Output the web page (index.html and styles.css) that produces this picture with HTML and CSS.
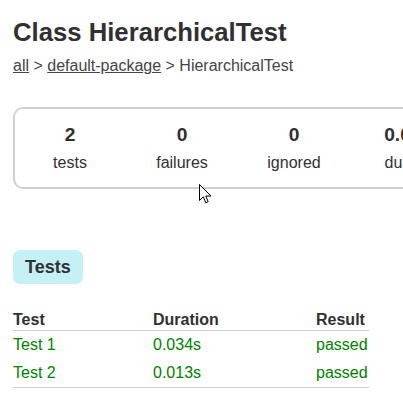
FILE: index.html
```
<!DOCTYPE html>
<html>
<head>
<meta charset="utf-8">
<title>Test results - Class HierarchicalTest</title>
<link rel="stylesheet" href="styles.css">
</head>
<body>
<div class="content">
  <h1 class="title">Class HierarchicalTest</h1>
  <div class="breadcrumbs"><a href="#">all</a> &gt; <a href="#">default-package</a> &gt; HierarchicalTest</div>
  <div class="summary">
    <div class="summary-group">
      <div class="info-box"><div class="counter">2</div><div class="label">tests</div></div>
      <div class="info-box"><div class="counter">0</div><div class="label">failures</div></div>
      <div class="info-box"><div class="counter">0</div><div class="label">ignored</div></div>
      <div class="info-box wide"><div class="counter">0.047s</div><div class="label">duration</div></div>
      <div class="info-box"><div class="counter">100%</div><div class="label">successful</div></div>
    </div>
  </div>
  <ul class="tab-links">
    <li class="tab selected">Tests</li>
  </ul>
  <table class="tests">
    <thead>
      <tr><th class="c-test">Test</th><th class="c-dur">Duration</th><th class="c-res">Result</th></tr>
    </thead>
    <tbody>
      <tr class="success"><td>Test 1</td><td>0.034s</td><td>passed</td></tr>
      <tr class="success last"><td>Test 2</td><td>0.013s</td><td>passed</td></tr>
    </tbody>
  </table>
</div>
<svg class="cursor" width="14" height="21" viewBox="0 0 14 21">
  <path d="M0.5 0.5 L0.5 16.5 L4.3 12.8 L6.8 18.8 L9.2 17.8 L6.8 12 L12 12 Z" fill="#fff" stroke="#000" stroke-width="1" stroke-linejoin="miter"/>
</svg>
</body>
</html>
```
FILE: styles.css
```
html { overflow: hidden; }
body {
  margin: 0;
  padding: 0;
  font-family: "Liberation Sans", Arial, sans-serif;
  font-size: 16px;
  color: #303030;
  background: #fff;
  position: relative;
  min-height: 418px;
}
a, a:visited { color: #303030; }
.content { padding: 17px 0 0 13px; width: 800px; }
.title {
  margin: 0;
  font-size: 25.7px;
  line-height: 30px;
  font-weight: bold;
}
.breadcrumbs {
  margin-top: 10px;
  line-height: 18px;
  color: #444;
}
.breadcrumbs a { color: #444; }
.summary { margin-top: 32px; }
.summary-group {
  display: inline-flex;
  gap: 2px;
  border: 2px solid #d0d0d0;
  border-radius: 10px;
}
.info-box {
  width: 110px;
  padding: 15px 0;
  text-align: center;
}
.info-box.wide { width: 125px; }
.counter {
  font-size: 19.2px;
  line-height: 22px;
  font-weight: bold;
  margin-bottom: 8px;
}
.label { line-height: 18px; }
.tab-links {
  list-style: none;
  margin: 61px 0 0 0;
  padding: 0;
  display: flex;
}
.tab {
  padding: 6px 12px;
  line-height: 22px;
  font-size: 18px;
  font-weight: bold;
  border-radius: 7px;
  background: #f0f0f0;
}
.tab.selected { background: #c5f0f5; }
.tests {
  margin-top: 27px;
  border-collapse: collapse;
}
.tests th {
  text-align: left;
  font-weight: bold;
  line-height: 18px;
  padding: 0 0 1px 0;
  border-bottom: 1px solid #d0d0d0;
}
.tests td {
  line-height: 18px;
  padding: 5px 0;
}
.c-test { width: 140px; }
.c-dur { width: 163px; }
.c-res { width: 53px; }
.success td { color: #008000; }
.last td { border-bottom: 1px solid #d0d0d0; }
.cursor {
  position: absolute;
  left: 199px;
  top: 184px;
}
```
